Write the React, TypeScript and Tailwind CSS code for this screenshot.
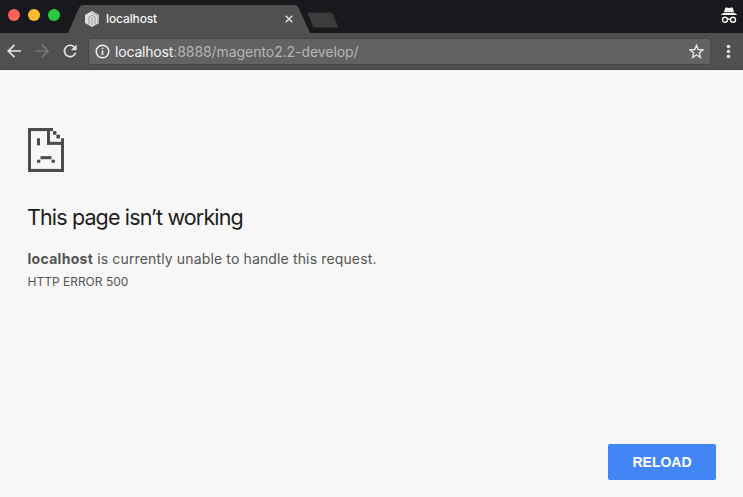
const darkCells: number[][] = [
  [0, 0, 25, 3], [0, 0, 3, 43], [0, 40, 36, 3], [33, 10, 3, 33],
  [19, 0, 3, 16.5], [19, 13.5, 17, 3], [25, 3, 3.4, 3.6], [28.4, 6.6, 3.6, 3.6],
  [9, 10, 3, 7], [12.5, 27.5, 11, 3], [9, 31, 3.3, 3], [23.6, 31, 3.3, 3],
];

function SadPage() {
  return (
    <svg width="36" height="44" viewBox="0 0 36 43" preserveAspectRatio="none" fill="#4c4c4c" className="block">
      {darkCells.map(([x, y, w, h], i) => <rect key={i} x={x} y={y} width={w} height={h} />)}
    </svg>
  );
}

function TabStrip() {
  return (
    <header className="relative flex h-[33px] bg-[#17191c]">
      <div className="flex w-[68px] gap-2 pl-2 pt-[9px]">
        <span className="size-3 rounded-full bg-[#fc605b]" />
        <span className="size-3 rounded-full bg-[#fdbc2e]" />
        <span className="size-3 rounded-full bg-[#2bc840]" />
      </div>
      <div className="relative mt-[5px] h-7 w-[242px]">
        <svg className="absolute inset-0" width="242" height="28" viewBox="0 0 242 28">
          <path d="M0 28 11 3Q12.3 0 15 0H227Q229.500 0 230.500 2.500L242 28Z" fill="#505050" />
        </svg>
        <div className="relative flex h-7 items-center pl-[17px]">
          <svg width="14" height="16" viewBox="0 0 14 16">
            <path d="M7 0 14 4V12L7 16 0 12V4Z" fill="#dedede" />
            <path d="M7 0 14 4V12L12 13V5L7 2.300Z" fill="#bdbdbd" />
            <path d="M4 13.500V6L7 4.300 10 6V13.500M7 6V14" fill="none" stroke="#929292" strokeWidth=".9" />
          </svg>
          <span className="ml-[7px] text-[12px] font-medium tracking-[-0.12px] text-[#f5f5f5]">localhost</span>
          <svg className="absolute left-[217px] top-[10px]" width="8" height="8" viewBox="0 0 8 8" stroke="#ddd" strokeWidth="1.500">
            <path d="m.7.7 6.600 6.600M7.300.7.7 7.300" />
          </svg>
        </div>
      </div>
      <svg className="-ml-[4px] mt-[12px]" width="34" height="17" viewBox="0 0 34 17">
        <path d="M1.500.8H25Q26.300.8 27 2L32 15.500H9Q7.500 15.500 6.800 14Z" fill="#3c3c3c" stroke="#303030" strokeWidth=".7" />
      </svg>
      <svg className="absolute right-[6px] top-[7px]" width="16" height="17" viewBox="0 0 16 17" fill="#f2f2f2">
        <path d="M4.200 1Q4.500.1 5.500.4L8 1 10.500.4Q11.500.1 11.800 1L13 5H3ZM2.800 5.800H13.200L16 7.500V8H0V7.500Z" />
        <g fill="none" stroke="#f2f2f2" strokeWidth="1.400">
          <circle cx="4" cy="12.800" r="2.500" /><circle cx="12" cy="12.800" r="2.500" /><path d="M6.500 12.500Q8 11.500 9.500 12.500" />
        </g>
      </svg>
    </header>
  );
}

function Toolbar() {
  return (
    <div className="flex h-[37px] items-center border-b border-[#424242] bg-[#505050] pl-[7px]">
      <svg width="72" height="16" viewBox="0 0 72 16" fill="none" strokeWidth="1.700">
        <path d="M14 8H1.500M7.500 1.800 1.300 8 7.500 14.200" stroke="#e8e8e8" />
        <path d="M28.500 8H41M35 1.800 41.200 8 35 14.200" stroke="#777" />
        <path d="M67.300 4A5.700 5.700 0 1 0 68.600 9.700" stroke="#e2e2e2" />
        <path d="M69.600 1.400V7.200H63.800Z" fill="#e2e2e2" />
      </svg>
      <div className="ml-[9px] flex h-[27px] w-[623px] items-center rounded-[3px] border border-[#474747] bg-[#626262] pl-[6px]">
        <svg width="15" height="15" viewBox="0 0 15 15" fill="none" stroke="#f1f1f1">
          <circle cx="7.500" cy="7.500" r="6.300" strokeWidth="1.500" /><path d="M7.500 6.600V11M7.500 3.800V5.300" strokeWidth="1.600" />
        </svg>
        <span className="ml-[5px] text-[14px] tracking-[-0.06px] text-[#b5b5b5]"><span className="tracking-[-0.18px] text-[#f5f5f5]">localhost</span>:8888/magento2.2-develop/</span>
        <svg className="ml-auto mr-[6px]" width="15" height="15" viewBox="0 0 15 15" fill="none" stroke="#e5e5e5" strokeWidth="1.400">
          <path d="m7.500 1.300 1.700 4.200 4.700.4-3.600 3 1.100 4.500-3.900-2.400-3.900 2.400 1.100-4.500L1.100 5.900l4.700-.4Z" />
        </svg>
      </div>
      <svg className="ml-[15px]" width="5" height="15" viewBox="0 0 5 15" fill="#e4e4e4">
        <circle cx="2.500" cy="2.500" r="1.800" /><circle cx="2.500" cy="7.500" r="1.800" /><circle cx="2.500" cy="12.500" r="1.800" />
      </svg>
    </div>
  );
}

export default function App() {
  return (
    <div className="flex h-[497px] w-[743px] flex-col overflow-hidden bg-[#f7f7f7] font-['Inter',sans-serif]">
      <TabStrip />
      <Toolbar />
      <main className="flex flex-1 flex-col pb-[17px] pl-7 pr-[27px] pt-[58px]">
        <SadPage />
        <h1 className="-ml-px mt-[31px] text-[21.500px] leading-[28px] tracking-[-0.86px] text-[#1c1c1c]">This page isn’t working</h1>
        <p className="-ml-[0.500px] mt-[16px] text-[14px] leading-6 tracking-[0.14px] text-[#545454]"><strong className="font-bold tracking-[0.3px]">localhost</strong> is currently unable to handle this request.</p>
        <p className="-ml-[0.500px] mt-[1px] text-[12px] leading-5 text-[#545454]">HTTP ERROR 500</p>
        <button className="mt-auto h-9 w-[108px] self-end rounded-[2px] bg-[#4286f5] font-['Liberation_Sans',sans-serif] text-[14px] font-bold text-white">RELOAD</button>
      </main>
    </div>
  );
}
